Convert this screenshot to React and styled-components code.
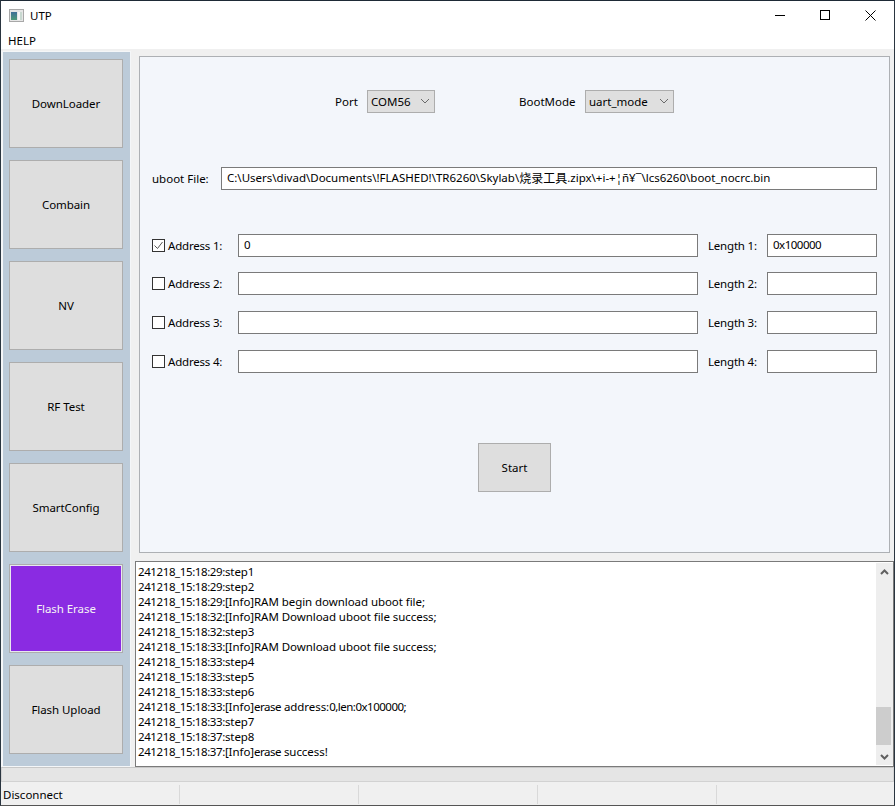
import React from 'react';
import styled, { createGlobalStyle } from 'styled-components';

const Global = createGlobalStyle`
  html, body { margin: 0; padding: 0; background: #f0f0f0; }
  * { box-sizing: border-box; }
  body { font-family: "Noto Sans", "Noto Sans CJK SC", sans-serif; font-size: 11.5px; color: #000; }
`;

const Win = styled.div`
  width: 895px; height: 806px; display: flex; flex-direction: column;
  border: 1px solid #2a3540; border-bottom-color: #555; border-top-color: #1e2a36;
  background: #f0f0f0; overflow: hidden;
`;
const TitleBar = styled.div`
  height: 30px; background: #fff; display: flex; align-items: center; flex: none; padding-bottom: 2px;
`;
const AppIcon = styled.svg`width: 15px; height: 13px; margin-left: 8px; flex: none;`;
const TitleText = styled.span`margin-left: 6px; font-size: 11.5px; flex: 1;`;
const WinBtn = styled.div`
  width: ${p => p.$w || 45}px; height: 28px; display: flex; align-items: center; justify-content: center;
  svg { display: block; }
`;
const WinBtns = styled.div`display: flex; margin-right: 1px;`;
const MenuBar = styled.div`
  height: 18px; background: #fff; display: flex; align-items: center; padding-left: 7px; flex: none;
`;
const Body = styled.div`
  flex: 1; min-height: 0; display: flex; padding-top: 2px; height: 716px;
`;
const Sidebar = styled.div`
  width: 130px; height: 716px; flex: none; background: #bccbd9;
  border: 1px solid #f4f6f8; border-left-width: 2px;
  padding: 7px 7px 0 6px; display: flex; flex-direction: column; gap: 12px;
`;
const NavBtn = styled.div`
  height: 89px; flex: none; display: flex; align-items: center; justify-content: center;
  letter-spacing: -0.06px;
  background: ${p => (p.$active ? '#8a2be2' : '#dedede')};
  color: ${p => (p.$active ? '#f4f4f4' : '#000')};
  border: 1px solid #adadad;
  box-shadow: ${p => (p.$active ? 'inset 0 0 0 1px #e8e8f0' : 'none')};
`;
const Right = styled.div`
  flex: 1; min-width: 0; display: flex; flex-direction: column; padding-left: 4px;
`;
const Panel = styled.div`
  height: 497px; margin: 5px 4px 0 4px; flex: none;
  background: #f3f6fb; border: 1px solid #adb0b4;
  display: flex; flex-direction: column; padding: 32px 11px 0 12px;
`;
const TopRow = styled.div`display: flex; align-items: center; height: 24px; padding-left: 183px;`;
const TopLabel = styled.span`width: ${p => p.$w}px; flex: none;`;
const Combo = styled.div`
  width: ${p => p.$w}px; height: 23px; flex: none; margin-right: ${p => p.$mr || 0}px;
  background: #dfdfdf; border: 1px solid #adadad; display: flex; align-items: center; justify-content: space-between;
  padding: 0 4px 0 3px;
`;
const FileRow = styled.div`display: flex; align-items: center; margin-top: 53px; height: 24px; padding-right: 1px;`;
const FileLabel = styled.span`width: 69px; flex: none;`;
const Field = styled.div`
  height: 23px; width: ${p => (p.$w ? `${p.$w}px` : 'auto')}; flex: ${p => (p.$w ? 'none' : '1')};
  background: #fff; border: 1px solid #7a7a7a; display: flex; align-items: center; padding: 0 0 ${p => p.$pb || 1}px 5px;
  white-space: pre; overflow: hidden;
`;
const Narrow = styled.span`letter-spacing: -0.5px;`;
const Cjk = styled.span`font-size: 12px;`;
const AddrRow = styled.div`
  display: grid; grid-template-columns: 86px 460px 69px 110px; align-items: center; height: 23px;
  margin-top: ${p => p.$top}px;
`;
const CheckWrap = styled.div`display: flex; align-items: center; gap: 3px; letter-spacing: -0.2px;`;
const Check = styled.div`
  width: 13px; height: 13px; border: 1px solid #333; background: #fff; display: flex; align-items: center; justify-content: center;
`;
const LenLabel = styled.span`padding-left: 10px; letter-spacing: -0.2px;`;
const StartWrap = styled.div`display: flex; justify-content: center; margin-top: 70px; padding-right: 1px;`;
const StartBtn = styled.div`
  width: 73px; height: 49px; background: #dedede; border: 1px solid #adadad;
  display: flex; align-items: center; justify-content: center;
`;
const LogBox = styled.div`
  height: 206px; margin-top: 8px; flex: none; background: #fff; border: 1px solid #7a7a7a;
  display: flex; position: relative;
`;
const LogText = styled.div`flex: 1; padding: 2px 0 0 2px; line-height: 15px; white-space: pre; overflow: hidden; letter-spacing: -0.06px;`;
const Stamp = styled.span`letter-spacing: -0.4px;`;
const ScrollBar = styled.div`
  width: 17px; flex: none; background: #eee; margin: 1px 0; display: flex; flex-direction: column;
`;
const ScrollArrow = styled.div`height: 17px; display: flex; align-items: center; justify-content: center; flex: none;`;
const ScrollTrack = styled.div`flex: 1; padding-top: 127px;`;
const Thumb = styled.div`width: 15px; height: 38px; background: #cdcdcd;`;
const Strip = styled.div`
  height: 15px; flex: none; background: #e5e5e5; border: 1px solid #d2d2d2; border-top-color: #c8c8c8;
`;
const StatusBar = styled.div`
  height: 23px; flex: none; display: flex; background: #f0f0f0; padding: 3px 0 1px;
`;
const StatusCell = styled.div`
  width: ${p => p.$w}px; flex: ${p => (p.$w ? 'none' : '1')}; border-right: ${p => (p.$last ? 'none' : '1px solid #d9d9d9')};
  padding-left: 2px; display: flex; align-items: center;
`;

const chevron = <svg width="10" height="6" viewBox="0 0 10 6"><path d="M1 1l4 4 4-4" fill="none" stroke="#6a6a6a" strokeWidth="1" /></svg>;

const nav = ['DownLoader', 'Combain', 'NV', 'RF Test', 'SmartConfig', 'Flash Erase', 'Flash Upload'];
const addrs = [
  { n: 1, top: 44, on: true, a: '0', l: '0x100000' },
  { n: 2, top: 15, a: '', l: '' },
  { n: 3, top: 16, a: '', l: '' },
  { n: 4, top: 16, a: '', l: '' },
];
// Each entry: timestamp, then message parts alternating normal / tightened spacing.
const log = [
  ['241218_15:18:29:', 'step1'],
  ['241218_15:18:29:', 'step2'],
  ['241218_15:18:29:', '[Info]RAM begin download uboot file;'],
  ['241218_15:18:32:', '[Info]RAM Download uboot file success;'],
  ['241218_15:18:32:', 'step3'],
  ['241218_15:18:33:', '[Info]RAM Download uboot file success;'],
  ['241218_15:18:33:', 'step4'],
  ['241218_15:18:33:', 'step5'],
  ['241218_15:18:33:', 'step6'],
  ['241218_15:18:33:', '[Info]', 'erase', ' address:', '0,len:0x100000', ';'],
  ['241218_15:18:33:', 'step7'],
  ['241218_15:18:37:', 'step8'],
  ['241218_15:18:37:', '[Info]', 'erase', ' success!'],
];

export default function App() {
  return (
    <>
      <Global />
      <Win>
        <TitleBar>
          <AppIcon viewBox="0 0 15 13">
            <defs>
              <linearGradient id="pane" x1="0" y1="0" x2="0" y2="1">
                <stop offset="0" stopColor="#3f6f98" />
                <stop offset="1" stopColor="#4f9a78" />
              </linearGradient>
            </defs>
            <rect x="0.5" y="0.5" width="14" height="12" fill="#e6e6e6" stroke="#a8a8a8" />
            <rect x="2" y="3" width="6" height="8" fill="url(#pane)" />
            <rect x="9" y="3" width="2" height="8" fill="#f6f6f6" />
            <rect x="11" y="3" width="2" height="8" fill="#c8d8d0" />
          </AppIcon>
          <TitleText>UTP</TitleText>
          <WinBtns>
            <WinBtn><svg width="10" height="10" viewBox="0 0 10 10"><path d="M0 5.5h10" stroke="#000" /></svg></WinBtn>
            <WinBtn><svg width="10" height="10" viewBox="0 0 10 10"><rect x="0.5" y="0.5" width="9" height="9" fill="none" stroke="#000" /></svg></WinBtn>
            <WinBtn $w={46}><svg width="11" height="11" viewBox="0 0 11 11"><path d="M.5.5l10 10M10.5.5l-10 10" stroke="#000" /></svg></WinBtn>
          </WinBtns>
        </TitleBar>
        <MenuBar>HELP</MenuBar>
        <Body>
          <Sidebar>
            {nav.map(n => <NavBtn key={n} $active={n === 'Flash Erase'}>{n}</NavBtn>)}
          </Sidebar>
          <Right>
            <Panel>
              <TopRow>
                <TopLabel $w={32}>Port</TopLabel>
                <Combo $w={68} $mr={84}>COM56{chevron}</Combo>
                <TopLabel $w={66}>BootMode</TopLabel>
                <Combo $w={89}>uart_mode{chevron}</Combo>
              </TopRow>
              <FileRow>
                <FileLabel>uboot File:</FileLabel>
                <Field>C:\Users\divad\Documents\!FLASHED!\TR6260\Skylab\<Cjk>烧录工具</Cjk>.zipx\+i-+¦ñ¥¯\lcs6260\boot_nocrc.bin</Field>
              </FileRow>
              {addrs.map(r => (
                <AddrRow key={r.n} $top={r.top}>
                  <CheckWrap>
                    <Check>{r.on && <svg width="11" height="11" viewBox="0 0 11 11"><path d="M1.5 5.5l3 3 5-6.5" fill="none" stroke="#555" strokeWidth="1" /></svg>}</Check>
                    <span>Address {r.n}:</span>
                  </CheckWrap>
                  <Field $w={460} $pb={2}>{r.a}</Field>
                  <LenLabel>Length {r.n}:</LenLabel>
                  <Field $w={110} $pb={2}><Narrow>{r.l}</Narrow></Field>
                </AddrRow>
              ))}
              <StartWrap><StartBtn>Start</StartBtn></StartWrap>
            </Panel>
            <LogBox>
              <LogText>
                {log.map(([stamp, ...parts], i) => (
                  <div key={i}>
                    <Stamp>{stamp}</Stamp>
                    {parts.map((p, j) => (j % 2 ? <Narrow key={j}>{p}</Narrow> : <span key={j}>{p}</span>))}
                  </div>
                ))}
              </LogText>
              <ScrollBar>
                <ScrollArrow><svg width="9" height="6" viewBox="0 0 9 6"><path d="M1 5l3.5-3.5L8 5" fill="none" stroke="#606060" strokeWidth="2" /></svg></ScrollArrow>
                <ScrollTrack><Thumb /></ScrollTrack>
                <ScrollArrow><svg width="9" height="6" viewBox="0 0 9 6"><path d="M1 1l3.5 3.5L8 1" fill="none" stroke="#606060" strokeWidth="2" /></svg></ScrollArrow>
              </ScrollBar>
            </LogBox>
          </Right>
        </Body>
        <Strip />
        <StatusBar>
          <StatusCell $w={179}>Disconnect</StatusCell>
          <StatusCell $w={179} />
          <StatusCell $w={179} />
          <StatusCell $w={179} />
          <StatusCell $last />
        </StatusBar>
      </Win>
    </>
  );
}
